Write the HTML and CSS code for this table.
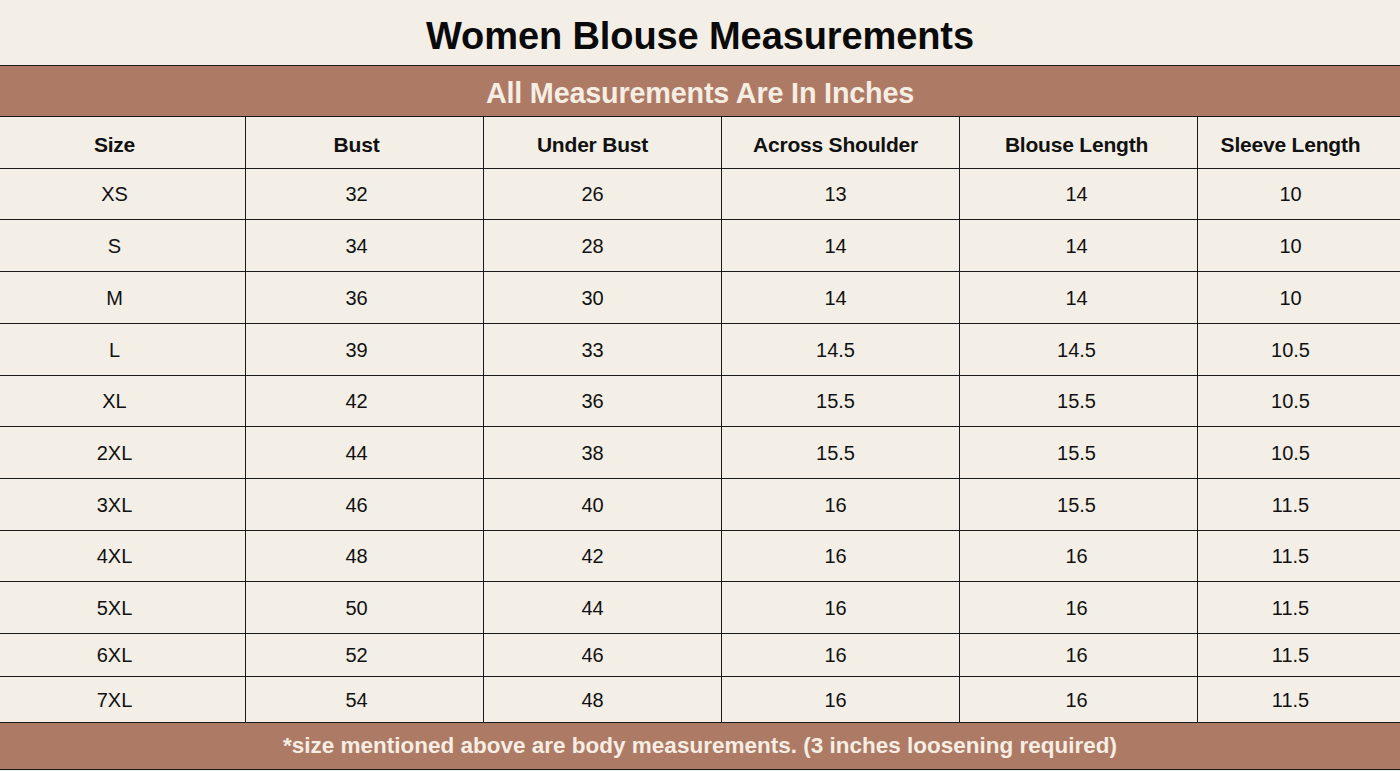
FILE: index.html
```html
<!DOCTYPE html>
<html lang="en">
<head>
<meta charset="utf-8">
<title>Women Blouse Measurements</title>
<link rel="stylesheet" href="styles.css">
</head>
<body>
<div class="page">
  <h1 class="title">Women Blouse Measurements</h1>
  <div class="band band-top">All Measurements Are In Inches</div>
  <div class="sheet">
    <div class="cell head c1">Size</div><div class="cell head c2">Bust</div><div class="cell head c3">Under Bust</div><div class="cell head c4">Across Shoulder</div><div class="cell head c5">Blouse Length</div><div class="cell head c6">Sleeve Length</div>
    <div class="cell c1">XS</div><div class="cell c2">32</div><div class="cell c3">26</div><div class="cell c4">13</div><div class="cell c5">14</div><div class="cell c6">10</div>
    <div class="cell c1">S</div><div class="cell c2">34</div><div class="cell c3">28</div><div class="cell c4">14</div><div class="cell c5">14</div><div class="cell c6">10</div>
    <div class="cell c1">M</div><div class="cell c2">36</div><div class="cell c3">30</div><div class="cell c4">14</div><div class="cell c5">14</div><div class="cell c6">10</div>
    <div class="cell c1">L</div><div class="cell c2">39</div><div class="cell c3">33</div><div class="cell c4">14.5</div><div class="cell c5">14.5</div><div class="cell c6">10.5</div>
    <div class="cell c1">XL</div><div class="cell c2">42</div><div class="cell c3">36</div><div class="cell c4">15.5</div><div class="cell c5">15.5</div><div class="cell c6">10.5</div>
    <div class="cell c1">2XL</div><div class="cell c2">44</div><div class="cell c3">38</div><div class="cell c4">15.5</div><div class="cell c5">15.5</div><div class="cell c6">10.5</div>
    <div class="cell c1">3XL</div><div class="cell c2">46</div><div class="cell c3">40</div><div class="cell c4">16</div><div class="cell c5">15.5</div><div class="cell c6">11.5</div>
    <div class="cell c1">4XL</div><div class="cell c2">48</div><div class="cell c3">42</div><div class="cell c4">16</div><div class="cell c5">16</div><div class="cell c6">11.5</div>
    <div class="cell c1">5XL</div><div class="cell c2">50</div><div class="cell c3">44</div><div class="cell c4">16</div><div class="cell c5">16</div><div class="cell c6">11.5</div>
    <div class="cell c1">6XL</div><div class="cell c2">52</div><div class="cell c3">46</div><div class="cell c4">16</div><div class="cell c5">16</div><div class="cell c6">11.5</div>
    <div class="cell c1">7XL</div><div class="cell c2">54</div><div class="cell c3">48</div><div class="cell c4">16</div><div class="cell c5">16</div><div class="cell c6">11.5</div>
  </div>
  <div class="band band-foot">*size mentioned above are body measurements. (3 inches loosening required)</div>
</div>
</body>
</html>
```

FILE: styles.css
```css
html, body {
  margin: 0;
  padding: 0;
  background: #f3efe7;
}

.page {
  width: 1400px;
  height: 771px;
  background: #f3efe7;
  font-family: "Liberation Sans", Arial, sans-serif;
  color: #111;
  overflow: hidden;
}

.title {
  margin: 0;
  height: 65px;
  display: flex;
  align-items: center;
  justify-content: center;
  font-size: 38px;
  font-weight: 700;
  color: #0a0a0a;
  letter-spacing: -0.1px;
  padding-top: 8px;
  box-sizing: border-box;
}

.band {
  background: #ad7a66;
  color: #f6eee3;
  font-weight: 700;
  display: flex;
  align-items: center;
  justify-content: center;
  border-top: 1px solid #1a1a1a;
  border-bottom: 1px solid #1a1a1a;
  box-sizing: border-box;
}

.band-top {
  height: 52px;
  font-size: 28.8px;
  letter-spacing: -0.2px;
  padding-top: 4px;
}

.band-foot {
  height: 47px;
  font-size: 22.5px;
  border-top: none;
}

.sheet {
  display: grid;
  grid-template-columns: 245px repeat(4, 237px) 1fr;
  grid-template-rows: 51px 50px 51px 51px 51px 50px 51px 51px 50px 51px 42px 45px;
  gap: 1px;
  background: #1a1a1a;
  border-bottom: 1px solid #1a1a1a;
}

.cell {
  background: #f3efe7;
  display: flex;
  align-items: center;
  justify-content: center;
  font-size: 20px;
  padding-right: 16px;
  padding-top: 1px;
  box-sizing: border-box;
}

.head {
  font-weight: 700;
  font-size: 21px;
  letter-spacing: -0.2px;
  padding-top: 5px;
}

.c3 { padding-right: 20px; }
.c4 { padding-right: 10px; }
.c5 { padding-right: 4px; }
.c6 { padding-right: 17px; }
```
